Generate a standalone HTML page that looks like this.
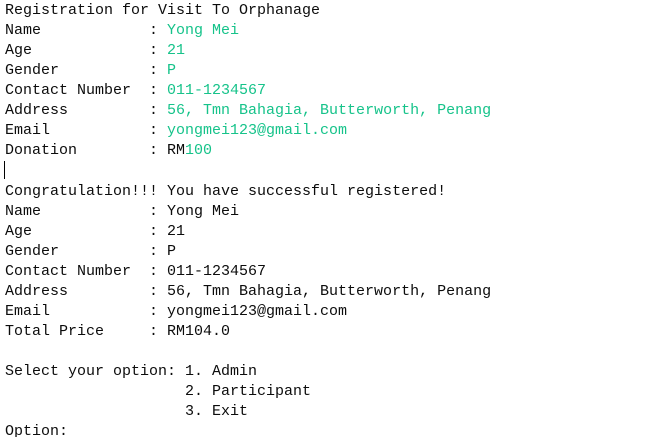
<!DOCTYPE html>
<html><head><style>
html,body{margin:0;padding:0;background:#fff;width:660px;height:437px;overflow:hidden}
pre{margin:0;padding:0 0 0 5px;font-family:"Liberation Mono",monospace;font-size:15px;line-height:20px;color:#0c0c0c;position:relative;top:1px}
.g{color:#16c38a}
.cur{display:inline-block;width:1px;height:18px;background:#000;vertical-align:-4px;margin-left:-1px}
</style></head><body><pre>Registration for Visit To Orphanage
Name            : <span class="g">Yong Mei</span>
Age             : <span class="g">21</span>
Gender          : <span class="g">P</span>
Contact Number  : <span class="g">011-1234567</span>
Address         : <span class="g">56, Tmn Bahagia, Butterworth, Penang</span>
Email           : <span class="g">yongmei123@gmail.com</span>
Donation        : RM<span class="g">100</span>
<span class="cur"></span>
Congratulation!!! You have successful registered!
Name            : Yong Mei
Age             : 21
Gender          : P
Contact Number  : 011-1234567
Address         : 56, Tmn Bahagia, Butterworth, Penang
Email           : yongmei123@gmail.com
Total Price     : RM104.0

Select your option: 1. Admin
                    2. Participant
                    3. Exit
Option:</pre></body></html>
